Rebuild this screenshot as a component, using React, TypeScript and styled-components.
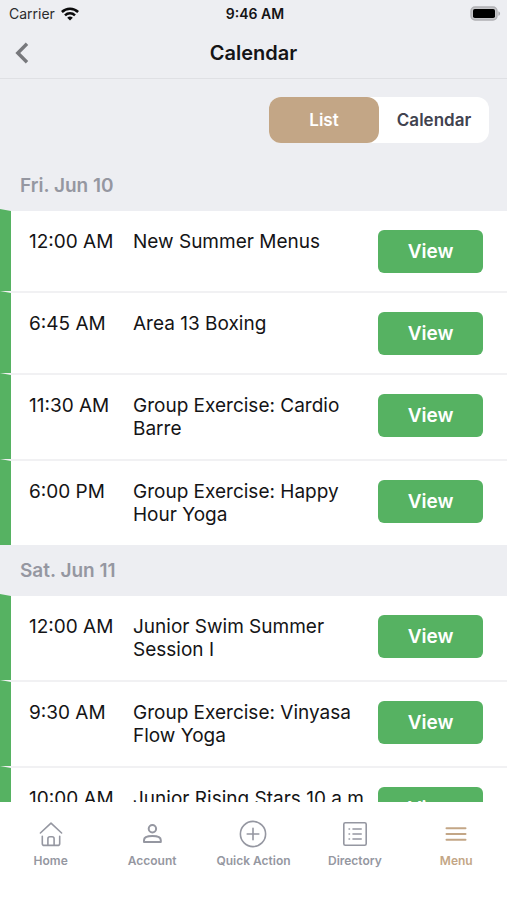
import React, { useState } from "react";
import styled, { createGlobalStyle } from "styled-components";

const color = {
  page: "#edeef2",
  line: "#dfe0e4",
  rowLine: "#f1f1f3",
  green: "#56b262",
  tan: "#c3a686",
  muted: "#9597a1",
  ink: "#141416",
};

const GlobalStyle = createGlobalStyle`
  *, *::before, *::after { box-sizing: border-box; }
  body {
    margin: 0;
    background: ${color.page};
    color: ${color.ink};
    font-family: Inter, "Liberation Sans", sans-serif;
  }
  button { font: inherit; border: 0; padding: 0; cursor: pointer; }
  h1, h2, ul { margin: 0; padding: 0; }
  ul { list-style: none; }
`;

const Screen = styled.div`
  display: flex;
  flex-direction: column;
  height: 100vh;
  background: ${color.page};
`;

const StatusBar = styled.div`
  display: grid;
  grid-template-columns: 1fr auto 1fr;
  align-items: center;
  height: 27px;
  padding: 0 6px 0 9px;
  font-size: 14px;
`;

const Carrier = styled.span`
  display: flex;
  align-items: center;
  gap: 6px;
  color: #2b2b2e;
`;

const Clock = styled.span`
  font-weight: 600;
`;

const BatterySlot = styled.span`
  display: flex;
  justify-content: flex-end;
`;

const NavBar = styled.header`
  display: grid;
  grid-template-columns: 48px 1fr 48px;
  align-items: center;
  height: 52px;
  border-bottom: 1px solid ${color.line};
`;

const BackButton = styled.button`
  display: flex;
  align-items: center;
  height: 44px;
  padding-left: 14px;
  background: none;
`;

const Title = styled.h1`
  text-align: center;
  font-size: 20px;
  line-height: 24px;
  font-weight: 600;
`;

const Scroller = styled.main`
  flex: 1;
  min-height: 0;
  overflow-y: auto;
  scrollbar-width: none;
`;

const Toolbar = styled.div`
  display: flex;
  justify-content: flex-end;
  padding: 18px 18px 17px;
`;

const Segmented = styled.div`
  display: flex;
  border-radius: 12px;
  background: #fff;
`;

const Segment = styled.button<{ $active: boolean }>`
  width: 110px;
  height: 46px;
  border-radius: 12px;
  background: ${(p) => (p.$active ? color.tan : "transparent")};
  color: ${(p) => (p.$active ? "#fff" : "#41434f")};
  font-size: 17px;
  font-weight: 600;
`;

const DayHeading = styled.h2`
  padding: 14px 20px 11px;
  color: ${color.muted};
  font-size: 19px;
  line-height: 24px;
  font-weight: 600;
`;

const EventRow = styled.li`
  display: grid;
  grid-template-columns: 104px 1fr 105px;
  align-items: start;
  min-height: 82px;
  padding: 19px 24px 19px 18px;
  border-top: 2px solid ${color.rowLine};
  border-left: 11px solid ${color.green};
  background: #fff;
  font-size: 19px;
  line-height: 23px;

  &:first-child {
    border-top-color: ${color.page};
  }
`;

const EventName = styled.span`
  padding-right: 4px;
`;

const ViewButton = styled.button`
  height: 43px;
  margin-bottom: -1px;
  border-radius: 6px;
  background: ${color.green};
  color: #fff;
  font-size: 19px;
  font-weight: 600;
`;

const TabBar = styled.nav`
  display: grid;
  grid-template-columns: repeat(5, 1fr);
  align-items: start;
  height: 98px;
  padding-top: 18px;
  background: #fff;
`;

const Tab = styled.button<{ $active: boolean }>`
  display: flex;
  flex-direction: column;
  align-items: center;
  gap: 5px;
  background: none;
  color: ${(p) => (p.$active ? color.tan : color.muted)};
  font-size: 12px;
  line-height: 16px;
  font-weight: 600;
  white-space: nowrap;
`;

const WifiIcon = () => (
  <svg width="18" height="14" viewBox="0 0 18 14" fill="none" stroke="#0b0b0c" strokeWidth="2.5" aria-hidden="true">
    <path d="M0.9 5a11.6 11.6 0 0 1 16.2 0" />
    <path d="M4 8.3a7.2 7.2 0 0 1 10 0" />
    <path d="M9 13.6L6.2 10.7a4.1 4.1 0 0 1 5.6 0z" fill="#0b0b0c" stroke="none" />
  </svg>
);

const BatteryIcon = () => (
  <svg width="31" height="15" viewBox="0 0 31 15" aria-hidden="true">
    <rect x="1" y="1" width="26" height="13" rx="4" fill="#c6c6c9" stroke="#b0b0b4" strokeWidth="1.4" />
    <rect x="3" y="3" width="22" height="9" rx="1.8" fill="#000" />
    <path d="M28.4 5.2c2.2.8 2.2 3.8 0 4.6z" fill="#a9a9ad" />
  </svg>
);

const BackIcon = () => (
  <svg width="16" height="22" viewBox="0 0 16 22" fill="none" stroke="#77787c" strokeWidth="3.4" aria-hidden="true">
    <path d="M13 1.8L3.8 11l9.2 9.2" />
  </svg>
);

const TabIcon = ({ children }: { children: React.ReactNode }) => (
  <svg
    width="28"
    height="28"
    viewBox="0 0 28 28"
    fill="none"
    stroke="currentColor"
    strokeWidth="1.6"
    strokeLinecap="round"
    strokeLinejoin="round"
    aria-hidden="true"
  >
    {children}
  </svg>
);

const HomeGlyph = () => (
  <TabIcon>
    <path d="M3.4 13L14 3.2 24.6 13" />
    <path d="M5.3 16.2v7.2q0 2 2 2h13.4q2 0 2-2v-7.2" />
    <path d="M10.9 25.2v-6.4q0-2 2-2h2.2q2 0 2 2v6.4" />
  </TabIcon>
);

const AccountGlyph = () => (
  <TabIcon>
    <g strokeWidth="2">
      <circle cx="14.4" cy="8.8" r="3.7" />
      <path d="M6 22v-1.8c0-2.6 3.5-4.1 8.4-4.1s8.4 1.5 8.4 4.1V22z" />
    </g>
  </TabIcon>
);

const PlusGlyph = () => (
  <TabIcon>
    <circle cx="14" cy="14" r="12.6" />
    <path d="M14 8.2v11.6M8.2 14h11.6" />
  </TabIcon>
);

const DirectoryGlyph = () => (
  <TabIcon>
    <rect x="2.8" y="2.8" width="22.4" height="22.4" rx="1.5" />
    <path d="M12 9h8.2M12 14h8.2M12 19h8.2M8.1 9h.4M8.1 14h.4M8.1 19h.4" />
  </TabIcon>
);

const MenuGlyph = () => (
  <TabIcon>
    <path d="M4.5 8.3h19M4.5 14h19M4.5 19.7h19" strokeWidth="2" />
  </TabIcon>
);

const days = [
  {
    label: "Fri. Jun 10",
    events: [
      { time: "12:00 AM", name: "New Summer Menus" },
      { time: "6:45 AM", name: "Area 13 Boxing" },
      { time: "11:30 AM", name: "Group Exercise: Cardio Barre" },
      { time: "6:00 PM", name: "Group Exercise: Happy Hour Yoga" },
    ],
  },
  {
    label: "Sat. Jun 11",
    events: [
      { time: "12:00 AM", name: "Junior Swim Summer Session I" },
      { time: "9:30 AM", name: "Group Exercise: Vinyasa Flow Yoga" },
      { time: "10:00 AM", name: "Junior Rising Stars 10 a.m." },
    ],
  },
];

const tabs = [
  { label: "Home", Glyph: HomeGlyph },
  { label: "Account", Glyph: AccountGlyph },
  { label: "Quick Action", Glyph: PlusGlyph },
  { label: "Directory", Glyph: DirectoryGlyph },
  { label: "Menu", Glyph: MenuGlyph },
];

export default function App() {
  const [view, setView] = useState("List");
  const [tab, setTab] = useState("Menu");

  return (
    <>
      <GlobalStyle />
      <Screen>
        <StatusBar>
          <Carrier>
            Carrier <WifiIcon />
          </Carrier>
          <Clock>9:46 AM</Clock>
          <BatterySlot>
            <BatteryIcon />
          </BatterySlot>
        </StatusBar>
        <NavBar>
          <BackButton aria-label="Back">
            <BackIcon />
          </BackButton>
          <Title>Calendar</Title>
        </NavBar>
        <Scroller>
          <Toolbar>
            <Segmented>
              {["List", "Calendar"].map((name) => (
                <Segment key={name} $active={view === name} aria-pressed={view === name} onClick={() => setView(name)}>
                  {name}
                </Segment>
              ))}
            </Segmented>
          </Toolbar>
          {days.map((day) => (
            <section key={day.label}>
              <DayHeading>{day.label}</DayHeading>
              <ul>
                {day.events.map((event) => (
                  <EventRow key={event.time}>
                    <time>{event.time}</time>
                    <EventName>{event.name}</EventName>
                    <ViewButton>View</ViewButton>
                  </EventRow>
                ))}
              </ul>
            </section>
          ))}
        </Scroller>
        <TabBar>
          {tabs.map(({ label, Glyph }) => (
            <Tab
              key={label}
              $active={tab === label}
              aria-current={tab === label ? "page" : undefined}
              onClick={() => setTab(label)}
            >
              <Glyph />
              {label}
            </Tab>
          ))}
        </TabBar>
      </Screen>
    </>
  );
}
